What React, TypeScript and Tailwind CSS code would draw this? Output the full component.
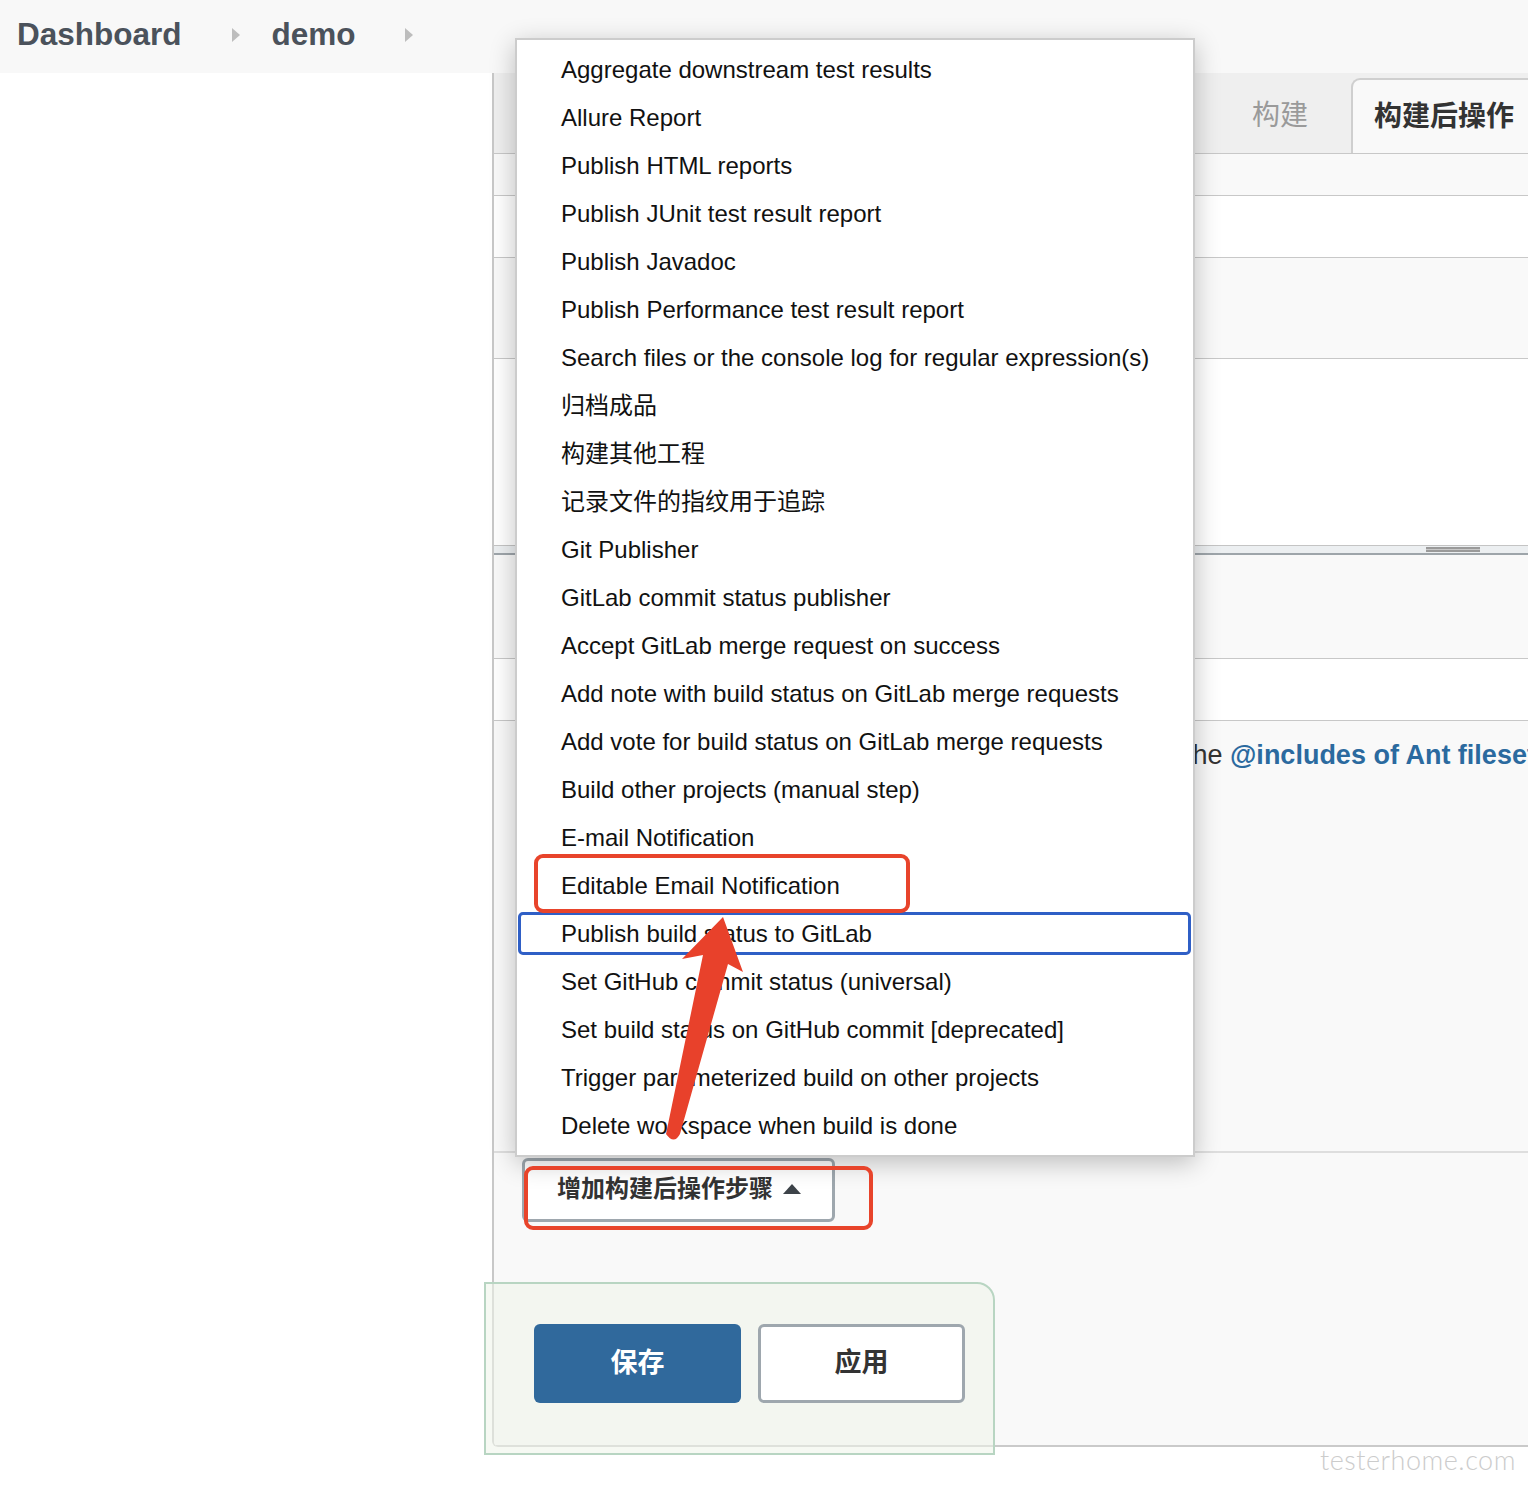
import React from "react";

const items = [
  "Aggregate downstream test results",
  "Allure Report",
  "Publish HTML reports",
  "Publish JUnit test result report",
  "Publish Javadoc",
  "Publish Performance test result report",
  "Search files or the console log for regular expression(s)",
  "归档成品",
  "构建其他工程",
  "记录文件的指纹用于追踪",
  "Git Publisher",
  "GitLab commit status publisher",
  "Accept GitLab merge request on success",
  "Add note with build status on GitLab merge requests",
  "Add vote for build status on GitLab merge requests",
  "Build other projects (manual step)",
  "E-mail Notification",
  "Editable Email Notification",
  "Publish build status to GitLab",
  "Set GitHub commit status (universal)",
  "Set build status on GitHub commit [deprecated]",
  "Trigger parameterized build on other projects",
  "Delete workspace when build is done",
];

const font = { fontFamily: '"Liberation Sans", "Noto Sans CJK SC", Arial, sans-serif' };

function Crumb() {
  return (
    <svg width="8" height="14" viewBox="0 0 8 14" className="shrink-0">
      <polygon points="0,0 8,7 0,14" fill="#bdbdbd" />
    </svg>
  );
}

export default function App() {
  return (
    <div
      className="relative w-[1528px] h-[1496px] overflow-hidden bg-white"
      style={font}
    >
      {/* header */}
      <div className="h-[73px] bg-[#f8f8f8] flex items-center pl-[17px] pb-[4px]">
        <span className="text-[31.5px] font-bold text-[#4b525b] leading-none">Dashboard</span>
        <span className="ml-[50px]"><Crumb /></span>
        <span className="ml-[32px] text-[31.5px] font-bold text-[#4b525b] leading-none">demo</span>
        <span className="ml-[49px]"><Crumb /></span>
      </div>

      {/* body */}
      <div className="flex">
        <div className="w-[492px] shrink-0 bg-white" />
        <div className="flex-1 flex flex-col border-l-2 border-[#c8c8c8] rounded-bl-[6px] overflow-hidden">
          {/* tab strip */}
          <div className="h-[81px] bg-[#efefef] border-b border-[#c8c8c8] flex justify-end items-end">
            <div className="h-[75px] flex items-center px-[43px] text-[28px] text-[#9a9a9a] leading-none">
              构建
            </div>
            <div className="h-[75px] w-[177px] shrink-0 flex items-center pl-[21px] rounded-tl-[9px] border-l-2 border-t-2 border-[#cfcfcf] bg-[#f9f9f9] text-[28px] font-bold text-[#333] leading-none whitespace-nowrap">
              构建后操作
            </div>
          </div>
          <div className="h-[42px] bg-[#f9f9f9] border-b border-[#c8c8c8]" />
          <div className="h-[62px] bg-white border-b border-[#c8c8c8]" />
          <div className="h-[101px] bg-[#f9f9f9] border-b border-[#c8c8c8]" />
          <div className="h-[186px] bg-white" />
          <div className="h-[10px] bg-[#eceff1] border-t border-[#c4c4c4] border-b-2 border-b-[#9ea5aa] flex items-center">
            <div className="ml-[932px] w-[54px] h-[5px] border-y-2 border-[#9a9a9a] bg-[#c8c8c8]" />
          </div>
          <div className="h-[104px] bg-[#f9f9f9] border-b border-[#c8c8c8]" />
          <div className="h-[62px] bg-white border-b border-[#c8c8c8]" />
          <div className="h-[432px] bg-[#f9f9f9] border-b-2 border-[#dedede] pt-[17px]">
            <div className="ml-[691px] text-[27px] leading-[34px] whitespace-nowrap text-[#333]">
              the <span className="font-bold text-[#2b6a9f]">@includes of Ant fileset</span>
            </div>
          </div>
          <div className="h-[294px] bg-[#f9f9f9] border-b-2 border-[#cacaca] pt-[5px]">
            <div className="ml-[28px] w-[313px] h-[64px] bg-white border-[3px] border-[#9ea7ae] rounded-[6px] flex items-center pl-[32px] pb-[2px]">
              <span className="text-[24px] font-bold text-[#333] leading-none">增加构建后操作步骤</span>
              <svg width="18" height="10" viewBox="0 0 18 10" className="ml-[10px]">
                <polygon points="0,10 9,0 18,10" fill="#3d4349" />
              </svg>
            </div>
          </div>
        </div>
      </div>

      {/* sticky save bar */}
      <div className="absolute left-[484px] top-[1282px] w-[511px] h-[173px] border-2 border-[#b8d5c2] rounded-tr-[18px] bg-[rgba(238,244,233,0.55)] flex gap-[17px] pl-[48px] pt-[40px]">
        <div className="w-[207px] h-[79px] bg-[#30699c] rounded-[6px] flex items-center justify-center text-white text-[27px] font-bold">
          保存
        </div>
        <div className="w-[207px] h-[79px] bg-white border-[3px] border-[#9ea7ae] rounded-[6px] flex items-center justify-center text-[#333] text-[27px] font-bold">
          应用
        </div>
      </div>

      {/* dropdown menu */}
      <div className="absolute left-[515px] top-[38px] w-[680px] h-[1119px] bg-white border-2 border-[#cccccc] shadow-[0_6px_24px_rgba(0,0,0,0.24)] pt-[6px]">
        {items.map((t) => (
          <div
            key={t}
            className="h-[48px] flex items-center pl-[44px] text-[24px] text-[#111] whitespace-nowrap leading-none"
          >
            {t}
          </div>
        ))}
      </div>

      {/* focus ring */}
      <div className="absolute left-[518px] top-[912px] w-[673px] h-[43px] border-[3px] border-[#2f5fc6] rounded-[5px]" />

      {/* red annotation boxes */}
      <div className="absolute left-[534px] top-[854px] w-[376px] h-[59px] border-[4px] border-[#e8442b] rounded-[9px]" />
      <div className="absolute left-[524px] top-[1166px] w-[349px] h-[64px] border-[4px] border-[#e8442b] rounded-[9px]" />

      {/* red arrow */}
      <svg className="absolute left-0 top-0" width="1528" height="1496" viewBox="0 0 1528 1496" style={{ pointerEvents: "none" }}>
        <path
          d="M723 917 L743 972 L728 964 L680 1134 Q674 1145 666 1134 L703 955 L682 959 Z"
          fill="#e8412b"
        />
      </svg>

      {/* watermark */}
      <div
        className="absolute left-[1320px] top-[1446px] text-[27px] text-[#cccccc] leading-none tracking-[0.5px]"
        style={{ fontFamily: 'Lato, "DejaVu Sans", sans-serif', fontWeight: 300 }}
      >
        testerhome.com
      </div>
    </div>
  );
}
